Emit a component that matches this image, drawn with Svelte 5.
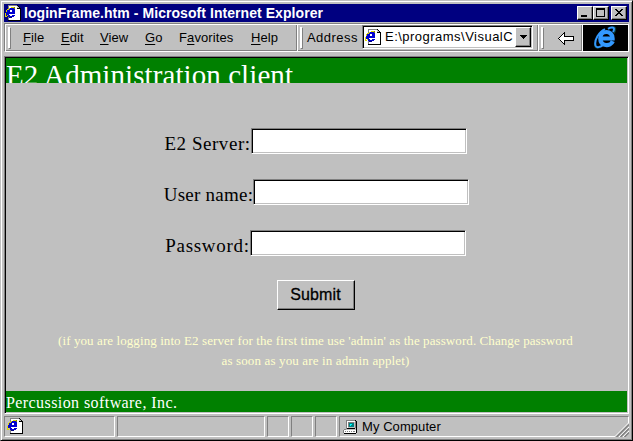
<script>
  const menus = [
    { pre: '', key: 'F', post: 'ile', w: 38 },
    { pre: '', key: 'E', post: 'dit', w: 39 },
    { pre: '', key: 'V', post: 'iew', w: 45 },
    { pre: '', key: 'G', post: 'o', w: 34 },
    { pre: 'F', key: 'a', post: 'vorites', w: 72 },
    { pre: '', key: 'H', post: 'elp', w: 45 }
  ];
  const fields = [
    { label: 'E2 Server:', type: 'text', cls: 'server' },
    { label: 'User name:', type: 'text', cls: 'user' },
    { label: 'Password:', type: 'password', cls: 'pass' }
  ];
</script>

{#snippet pageIcon()}
  <svg class="page" width="16" height="16" viewBox="0 0 16 16" shape-rendering="crispEdges">
    <path fill="#808080" d="M3 0h9v1H3zM3 1h1v14H3z" />
    <path fill="#fff" d="M4 1h8v3h3v11H4z" />
    <path fill="#c0c0c0" d="M12 1h1v1h1v1h1v1h-3z" />
    <path fill="#000" d="M12 0h1v1h-1zM13 1h1v1h-1zM14 2h1v1h-1zM12 3h3v1h-3zM15 3h1v13H3v-1h12z" />
    <path fill="#0000d0" d="M4 3h5v1H4zM3 4h7v1H3zM2 5h3v2H2zM7 5h3v2H7zM1 7h9v2H1zM1 9h3v1H1zM2 10h3v1H2zM7 10h3v1H7zM3 11h6v1H3z" />
    <path fill="#000080" d="M9 3h1v1H9zM4 12h3v1H4z" />
    <path fill="#e0d800" d="M6 2h3v1H6zM4 3h1v1H4zM2 4h2v1H2zM1 5h1v2H1zM0 8h1v3H0zM0 11h2v1H0zM2 10h1v1H2z" />
    <path fill="#808000" d="M9 2h1v2H9z" />
  </svg>
{/snippet}

<div class="window">
  <header class="title">
    {@render pageIcon()}
    <span class="caption">loginFrame.htm - Microsoft Internet Explorer</span>
    <button class="ctl" aria-label="Minimize">
      <svg width="12" height="10" shape-rendering="crispEdges"><path d="M2 7h6v2H2z" /></svg>
    </button>
    <button class="ctl" aria-label="Maximize">
      <svg width="12" height="10" shape-rendering="crispEdges"><path fill-rule="evenodd" d="M1 0h9v9H1zM2 2v6h7V2z" /></svg>
    </button>
    <button class="ctl close" aria-label="Close">
      <svg width="12" height="10" shape-rendering="crispEdges"><path d="M2 1h2v1H2zM3 2h2v1H3zM4 3h2v1H4zM5 4h2v1H5zM4 5h2v1H4zM3 6h2v1H3zM2 7h2v1H2zM8 1h2v1H8zM7 2h2v1H7zM6 3h2v1H6zM6 5h2v1H6zM7 6h2v1H7zM8 7h2v1H8z" /></svg>
    </button>
  </header>

  <div class="rebar">
    <i class="grip"></i>
    <nav>
      {#each menus as m}
        <span style:width="{m.w}px">{m.pre}<u>{m.key}</u>{m.post}</span>
      {/each}
    </nav>
    <i class="sep"></i>
    <i class="grip"></i>
    <span class="address">Address</span>
    <div class="combo">
      {@render pageIcon()}
      <span class="url">E:\programs\VisualC</span>
      <button class="drop" aria-label="Open list">
        <svg width="7" height="4" shape-rendering="crispEdges"><path d="M0 0h7v1H0zM1 1h5v1H1zM2 2h3v1H2zM3 3h1v1H3z" /></svg>
      </button>
    </div>
    <i class="sep second"></i>
    <i class="grip"></i>
    <div class="back">
      <svg width="16" height="13" viewBox="0 0 16 13" shape-rendering="crispEdges">
        <path d="M6 0h1v4h9v5H7v4H6v-1H5v-1H4v-1H3V9H2V8H1V7H0V6h1V5h1V4h1V3h1V2h1V1h1z" />
        <path fill="#fff" d="M5 2h1v3h9v3H6v3H5v-1H4V9H3V8H2V7H1V6h1V5h1V4h1V3h1z" />
      </svg>
    </div>
    <div class="logo">
      <svg width="24" height="24" viewBox="0 0 24 24">
        <path fill="none" stroke="#0c4038" stroke-width="1.500" d="M17 1.500C21 0 23 2 20 7.500M1.500 16c-2 4 0 7 4 5.500" />
        <path fill="none" stroke="#3399ff" stroke-width="4.200" d="M18.800 15.200C16.500 21 6.300 20.500 6.300 12.500C6.300 3.800 18.600 3.800 18.600 12.500H6" />
        <path fill="none" stroke="#3399ff" stroke-width="2" d="M11 3.200C5 6 0 14 1.500 19.500c.8 2.500 4.500 2 7.500-.5M14 2.800c3-1.800 6-1.800 6 .2 0 1-.4 2-1 3" />
      </svg>
    </div>
  </div>

  <main>
    <h1>E2 Administration client</h1>
    <form onsubmit={(e) => e.preventDefault()}>
      {#each fields as f}
        <label class={f.cls}><span>{f.label}</span><input type={f.type} /></label>
      {/each}
      <button class="submit">Submit</button>
      <p>
        <span class="l1">(if you are logging into E2 server for the first time use 'admin' as the password. Change password</span><br />
        <span class="l2">as soon as you are in admin applet)</span>
      </p>
    </form>
    <footer>Percussion software, Inc.</footer>
  </main>

  <div class="status">
    <div class="pane a">{@render pageIcon()}</div>
    <div class="pane b"></div>
    <div class="pane s"></div>
    <div class="pane s"></div>
    <div class="pane s"></div>
    <div class="pane zone">
      <svg width="15" height="14" viewBox="0 0 15 14" shape-rendering="crispEdges">
        <path fill="#808080" d="M3 0h9v1H3zM3 1h1v8H3zM1 9h2v1H1zM0 10h1v3H0z" />
        <path fill="#fff" d="M4 1h8v1H4zM4 2h1v6H4z" />
        <path fill="#c0c0c0" d="M5 2h7v6H5zM2 10h10v1H2z" />
        <path fill="#808080" d="M5 2h6v1H5zM5 3h1v4H5z" />
        <path fill="#008080" d="M6 3h5v4H6z" />
        <path fill="#00ffff" d="M7 4h2v1H7zM7 5h1v1H7z" />
        <path fill="#000" d="M12 0h1v1h1v8h-1V8h-1zM4 8h8v1H4zM13 9h1v4h-1zM1 13h12v1H1z" />
        <path fill="#fff" d="M1 10h12v3H1z" />
        <path fill="#808080" d="M12 1h1v7h-1zM2 11h1v1H2zM4 11h1v1H4zM6 11h1v1H6zM8 11h1v1H8zM10 11h2v1h-2z" />
      </svg>
      <span>My Computer</span>
      <svg class="sizer" width="14" height="14" viewBox="0 0 14 14">
        <path fill="#c0c0c0" d="M12 0h2v14H0v-2z" />
        <path stroke="#fff" d="M0 13.500L13.500 0M4 14L14 4M8 14l6-6" />
        <path stroke="#808080" stroke-width="1.500" d="M1.500 14L14 1.500M5.500 14L14 5.500M9.500 14L14 9.500" />
      </svg>
    </div>
  </div>
</div>

<style>
  :global(body) { margin: 0; background: #c0c0c0; }
  * { box-sizing: border-box; }
  .window {
    width: 633px; height: 441px; padding: 3px; background: #c0c0c0; color: #000;
    border: 1px solid; border-color: #c0c0c0 #000 #000 #c0c0c0;
    box-shadow: inset 1px 1px #fff, inset -1px -1px #808080;
    font: 13px/16px "Liberation Sans", Arial, sans-serif;
    display: flex; flex-direction: column; overflow: hidden;
  }
  svg { display: block; flex: none; }
  button { padding: 0; background: #c0c0c0; color: #000; border-radius: 0; flex: none; }
  .title { height: 18px; background: #000080; color: #fff; display: flex; align-items: center; padding: 0 2px 0 1px; flex: none; }
  .caption { flex: 1; font-weight: bold; font-size: 14px; letter-spacing: 0.06px; margin-left: 3px; white-space: nowrap; }
  .ctl, .drop { border: 1px solid; border-color: #fff #000 #000 #fff; box-shadow: inset -1px -1px #808080; }
  .ctl { width: 16px; height: 14px; padding: 1px; }
  .ctl.close { margin-left: 2px; }

  .rebar {
    height: 29px; margin-top: 1px; flex: none; display: flex; align-items: stretch;
    border: 1px solid; border-color: #808080 #fff #fff #808080;
    box-shadow: inset 1px 1px #fff, inset 0 -1px #808080;
    padding: 1px 0 0 3px;
  }
  .grip { width: 3px; height: 22px; margin-top: 2px; border: 1px solid; border-color: #fff #808080 #808080 #fff; flex: none; background: #fff; }
  nav { display: flex; margin-left: 12px; width: 273px; padding-top: 5px; flex: none; }
  nav span { flex: none; white-space: nowrap; letter-spacing: 0.1px; }
  u { text-decoration: underline; text-underline-offset: 2px; text-decoration-thickness: 1px; text-decoration-skip-ink: none; }
  .sep { width: 2px; height: 26px; background: linear-gradient(90deg, #808080 50%, #fff 50%); flex: none; margin-right: 2px; }
  .address { margin: 5px 0 0 4px; width: 55px; letter-spacing: 0.45px; flex: none; }
  .combo {
    width: 171px; height: 24px; background: #fff; display: flex; align-items: center; flex: none;
    border: 1px solid; border-color: #808080 #fff #fff #808080;
    box-shadow: inset 1px 1px #000, inset -1px -1px #c0c0c0; padding: 1px 1px 1px 2px;
  }
  .url { margin-left: 4px; flex: 1; white-space: nowrap; letter-spacing: 0.48px; }
  .drop { width: 16px; height: 20px; display: flex; justify-content: center; align-items: center; }
  .sep.second { margin-left: 4px; }
  .back { width: 38px; padding: 7px 0 0 14px; flex: none; border-right: 1px solid #808080; }
  .logo { width: 45px; margin-left: 1px; height: 26px; background: #000; box-shadow: -1px 0 #fff; padding: 1px 0 0 11px; }

  main {
    height: 358px; margin-top: 4px; flex: none; display: flex; flex-direction: column;
    border: 1px solid; border-color: #808080 #fff #fff #808080;
    box-shadow: inset 1px 1px #000; padding: 1px;
    font-family: "Liberation Serif", "Times New Roman", serif;
  }
  h1 { margin: 0; height: 25px; flex: none; background: #008000; color: #fff; font-weight: normal; font-size: 29px; line-height: 34px; letter-spacing: 0.08px; overflow: hidden; white-space: nowrap; }
  form { flex: 1; display: flex; flex-direction: column; align-items: center; padding: 45px 2px 0 0; }
  label { display: flex; height: 26px; margin-bottom: 25px; font-size: 19px; line-height: 31px; white-space: nowrap; }
  .server { letter-spacing: 0.55px; }
  .user { letter-spacing: 0.25px; position: relative; left: 1px; }
  .pass { letter-spacing: 0.7px; }
  input {
    width: 216px; height: 26px; margin: 0; padding: 0 4px; outline: 0; border-radius: 0; background: #fff;
    border: 1px solid; border-color: #808080 #fff #fff #808080;
    box-shadow: inset 1px 1px #000, inset -1px -1px #c0c0c0;
  }
  .submit {
    width: 78px; height: 30px; margin-top: -1px; font: 16px/26px "Liberation Sans", Arial, sans-serif;
    border: 1px solid; border-color: #fff #000 #000 #fff; box-shadow: inset -1px -1px #808080;
    letter-spacing: 0.15px; -webkit-text-stroke: 0.3px #000;
  }
  p { margin: 21px 0 0; font-size: 13px; line-height: 20px; color: #ffffcc; text-align: center; white-space: nowrap; }
  .l1 { letter-spacing: 0.085px; }
  .l2 { letter-spacing: 0.14px; }
  footer { height: 21px; flex: none; background: #008000; color: #fff; font-size: 16px; line-height: 23px; letter-spacing: 0.42px; }

  .status { display: flex; gap: 2px; margin-top: 2px; height: 21px; flex: none; }
  .pane { border: 1px solid; border-color: #808080 #fff #fff #808080; flex: none; }
  .a { width: 111px; padding: 1px 2px; }
  .b { width: 148px; }
  .s { width: 22px; }
  .zone { flex: 1; display: flex; align-items: center; padding-left: 3px; position: relative; letter-spacing: 0.07px; }
  .zone span { margin-left: 4px; font-size: 13px; }
  .sizer { position: absolute; right: -1px; bottom: -1px; }
</style>
